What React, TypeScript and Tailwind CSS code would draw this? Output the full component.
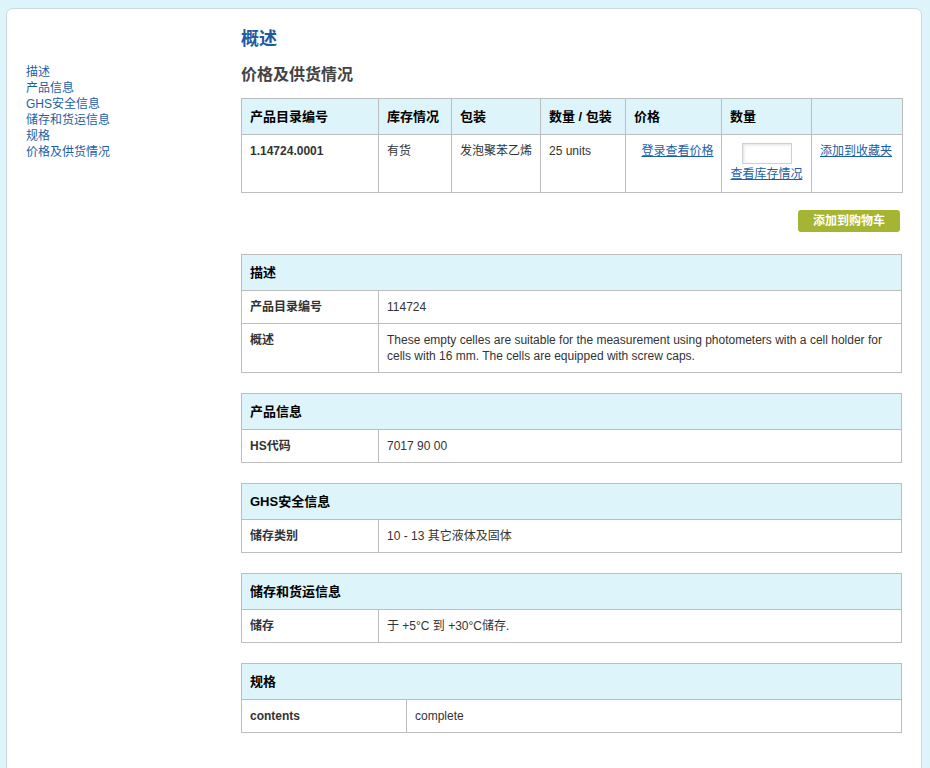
const navItems = ["描述", "产品信息", "GHS安全信息", "储存和货运信息", "规格", "价格及供货情况"];

type Section = {
  title: string;
  labelWidth: string;
  rows: { label: string; value: string }[];
};

const sections: Section[] = [
  {
    title: "描述",
    labelWidth: "w-[137px]",
    rows: [
      { label: "产品目录编号", value: "114724" },
      {
        label: "概述",
        value:
          "These empty celles are suitable for the measurement using photometers with a cell holder for cells with 16 mm. The cells are equipped with screw caps.",
      },
    ],
  },
  { title: "产品信息", labelWidth: "w-[137px]", rows: [{ label: "HS代码", value: "7017 90 00" }] },
  { title: "GHS安全信息", labelWidth: "w-[137px]", rows: [{ label: "储存类别", value: "10 - 13 其它液体及固体" }] },
  { title: "储存和货运信息", labelWidth: "w-[137px]", rows: [{ label: "储存", value: "于 +5°C 到 +30°C储存." }] },
  { title: "规格", labelWidth: "w-[165px]", rows: [{ label: "contents", value: "complete" }] },
];

const InfoTable = ({ section }: { section: Section }) => {
  return (
    <table className="w-[661px] border-collapse border border-[#bdbdbd] table-fixed">
      <colgroup>
        <col className={section.labelWidth} />
        <col />
      </colgroup>
      <thead>
        <tr>
          <th colSpan={2} className="h-[36px] bg-[#ddf4fb] text-left px-2 text-[13px] font-bold text-black border-b border-[#bdbdbd]">
            {section.title}
          </th>
        </tr>
      </thead>
      <tbody>
        {section.rows.map((row) => (
          <tr key={row.label}>
            <td className="align-top px-2 py-[8px] text-[12px] leading-[16px] font-bold text-[#333] border border-[#bdbdbd]">
              {row.label}
            </td>
            <td className="align-top px-2 py-[8px] text-[12px] leading-[16px] text-[#333] border border-[#bdbdbd]">
              {row.value}
            </td>
          </tr>
        ))}
      </tbody>
    </table>
  );
};

const App = () => {
  const headCell = "h-[36px] text-left px-2 text-[13px] font-bold text-black border border-[#bdbdbd] bg-[#ddf4fb]";
  const bodyCell = "align-top px-2 pt-[7px] text-[12px] text-[#333] border border-[#bdbdbd]";

  return (
    <div className="min-h-[768px] bg-[#ddf4fb] pt-[8px] pl-[6px] pr-[8px] font-['Liberation_Sans','Noto_Sans_CJK_SC',sans-serif]">
      <div className="min-h-[790px] bg-white border border-[#cfd8dc] rounded-t-[7px] flex">
        <nav className="w-[234px] shrink-0 pl-[19px] pt-[55px] flex flex-col">
          {navItems.map((item) => (
            <a key={item} href="#" className="text-[12px] leading-[16px] text-[#1b5fa8]">
              {item}
            </a>
          ))}
        </nav>

        <main className="flex-1 pt-[18px]">
          <h1 className="text-[18px] leading-[24px] font-bold text-[#1e5aa0]">概述</h1>
          <h2 className="mt-[13px] text-[16px] leading-[22px] font-bold text-[#444]">价格及供货情况</h2>

          <table className="mt-[12px] w-[661px] border-collapse table-fixed">
            <thead>
              <tr>
                <th className={`${headCell} w-[137px]`}>产品目录编号</th>
                <th className={`${headCell} w-[73px]`}>库存情况</th>
                <th className={`${headCell} w-[89px]`}>包装</th>
                <th className={`${headCell} w-[85px]`}>数量 / 包装</th>
                <th className={`${headCell} w-[96px]`}>价格</th>
                <th className={`${headCell} w-[90px]`}>数量</th>
                <th className={`${headCell} w-[91px]`}></th>
              </tr>
            </thead>
            <tbody>
              <tr className="h-[58px]">
                <td className={`${bodyCell} font-bold`}>1.14724.0001</td>
                <td className={`${bodyCell} text-[#222]`}>有货</td>
                <td className={bodyCell}>发泡聚苯乙烯</td>
                <td className={bodyCell}>25 units</td>
                <td className={`${bodyCell} text-center pl-[12px] pr-1`}>
                  <a href="#" className="text-[#1b5fa8] underline">登录查看价格</a>
                </td>
                <td className="align-top pt-[8px] text-center border border-[#bdbdbd]">
                  <div className="flex flex-col items-center">
                    <input
                      type="text"
                      className="w-[50px] h-[21px] border border-[#d0d0d0] bg-white shadow-[inset_1px_1px_3px_rgba(0,0,0,0.12)] outline-none"
                    />
                    <a href="#" className="mt-[1px] text-[12px] text-[#1b5fa8] underline">查看库存情况</a>
                  </div>
                </td>
                <td className={bodyCell}>
                  <a href="#" className="text-[#1b5fa8] underline">添加到收藏夹</a>
                </td>
              </tr>
            </tbody>
          </table>

          <div className="w-[661px] flex justify-end mt-[17px] pr-[2px]">
            <button className="w-[102px] h-[22px] rounded-[3px] bg-[#a5b533] text-white text-[12px] font-bold">
              添加到购物车
            </button>
          </div>

          <div className="mt-[22px] flex flex-col gap-[20px] pb-[30px]">
            {sections.map((section) => (
              <InfoTable key={section.title} section={section} />
            ))}
          </div>
        </main>
      </div>
    </div>
  );
};

export default App;
